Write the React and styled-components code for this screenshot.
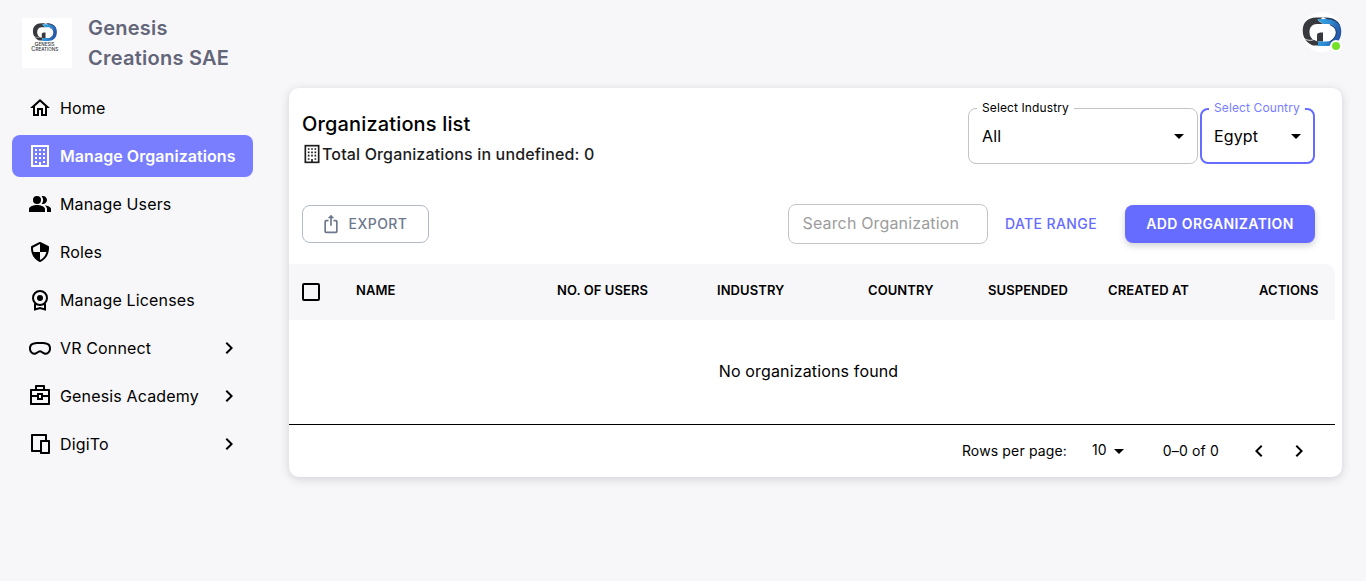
import React from "react";
import styled, { createGlobalStyle, css } from "styled-components";
import { BiShieldQuarter } from "react-icons/bi";
import { MdPeopleAlt, MdChevronRight, MdChevronLeft } from "react-icons/md";
import { RiBriefcase4Line, RiDeviceLine } from "react-icons/ri";
import { TbDeviceVisionPro } from "react-icons/tb";

const GlobalStyle = createGlobalStyle`
  *, *::before, *::after { box-sizing: border-box; }
  body {
    margin: 0;
    background: #f7f7f9;
    color: #000;
    font-family: Inter, "Liberation Sans", sans-serif;
    font-size: 16px;
    letter-spacing: 0.15px;
  }
  button, input { font: inherit; color: inherit; letter-spacing: inherit; }
`;

const Page = styled.div`
  display: flex;
  min-height: 581px;
`;

const Sidebar = styled.aside`
  width: 265px;
  flex: none;
  padding: 13px 12px 0;
`;

const Brand = styled.div`
  display: flex;
  align-items: center;
  gap: 16px;
  height: 60px;
  padding-left: 10px;
`;

const BrandLogo = styled.div`
  width: 50px;
  height: 50px;
  background: #fff;
  svg { display: block; }
`;

const BrandName = styled.h1`
  margin: 0;
  width: 150px;
  font-size: 20px;
  line-height: 30px;
  font-weight: 600;
  letter-spacing: 0.25px;
  color: #636578;
`;

const Nav = styled.nav`
  display: flex;
  flex-direction: column;
  gap: 6px;
  margin-top: 14px;
`;

const NavItem = styled.a`
  display: flex;
  align-items: center;
  gap: 8px;
  height: 42px;
  padding: 0 12px 0 16px;
  border-radius: 8px;
  line-height: 24px;
  ${(p) =>
    p.$active &&
    css`
      background: #787eff;
      color: #fff;
      font-weight: 600;
      letter-spacing: 0.06px;
    `}
  svg { flex: none; }
`;

const NavLabel = styled.span`
  flex: 1;
  white-space: nowrap;
`;

const Main = styled.main`
  flex: 1;
  padding: 12px 24px 0;
`;

const TopBar = styled.header`
  display: flex;
  justify-content: flex-end;
  height: 76px;
`;

const Avatar = styled.div`
  position: relative;
  width: 40px;
  height: 40px;
  border-radius: 50%;
  background: #fff;
`;

const OnlineDot = styled.span`
  position: absolute;
  right: 0;
  bottom: 0;
  width: 12px;
  height: 12px;
  border-radius: 50%;
  background: #72e128;
  border: 2px solid #fff;
`;

const Card = styled.section`
  height: 389px;
  padding-right: 7px;
  background: #fff;
  border-radius: 10px;
  box-shadow: 0 2px 10px rgba(76, 78, 100, 0.22);
`;

const CardHeader = styled.div`
  display: flex;
  justify-content: space-between;
  height: 117px;
  padding: 20px 20px 0 13px;
`;

const Title = styled.h2`
  margin: 0;
  font-size: 20px;
  line-height: 32px;
  font-weight: 500;
`;

const Total = styled.div`
  display: flex;
  align-items: center;
  height: 28px;
  font-weight: 500;
  color: #1c1c1c;
`;

const Filters = styled.div`
  display: flex;
  gap: 2px;
`;

const Select = styled.fieldset`
  display: flex;
  align-items: center;
  justify-content: space-between;
  position: relative;
  width: ${(p) => p.$width}px;
  height: 56px;
  margin: 0;
  padding: 0 ${(p) => (p.$focused ? 5 : 6)}px 0 ${(p) => (p.$focused ? 12 : 13)}px;
  border: ${(p) => (p.$focused ? "2px solid #666cff" : "1px solid #c4c4c4")};
  border-radius: 8px;
`;

const FloatingLabel = styled.span`
  position: absolute;
  top: ${(p) => (p.$focused ? -10 : -9)}px;
  left: ${(p) => (p.$focused ? 7 : 8)}px;
  padding: 0 5px;
  background: #fff;
  font-size: 12px;
  line-height: 16px;
  letter-spacing: 0.11px;
  white-space: nowrap;
  color: ${(p) => (p.$focused ? "#787eff" : "#000")};
`;

const Toolbar = styled.div`
  display: flex;
  align-items: center;
  height: 38px;
  padding: 0 20px 0 13px;
`;

const Button = styled.button`
  display: inline-flex;
  align-items: center;
  justify-content: center;
  gap: 8px;
  height: 38px;
  padding: 0 0 1px;
  border: 0;
  border-radius: 8px;
  background: none;
  font-size: 14px;
  font-weight: 500;
  letter-spacing: 0.4px;
  white-space: nowrap;
`;

const ExportButton = styled(Button)`
  width: 127px;
  padding-right: 3px;
  border: 1px solid #b4b9c6;
  color: #6d788d;
  letter-spacing: 0.46px;
  margin-right: auto;
  svg { position: relative; top: 0.5px; }
`;

const SearchInput = styled.input`
  width: 200px;
  height: 40px;
  padding: 0 13px 2px 13.5px;
  border: 1px solid #c4c4c4;
  border-radius: 8px;
  background: #fff;
  outline: 0;
  &::placeholder { color: #9c9c9c; opacity: 1; }
`;

const DateButton = styled(Button)`
  width: 126px;
  color: #666cff;
`;

const AddButton = styled(Button)`
  width: 190px;
  margin-left: 11px;
  background: #666cff;
  color: #fff;
  font-weight: 600;
  box-shadow: 0 3px 6px rgba(76, 78, 100, 0.25);
`;

const TableHead = styled.div`
  display: grid;
  grid-template-columns: 54px 201px 160px 151px 120px 120px 151px 1fr;
  align-items: center;
  height: 56px;
  margin-top: 21px;
  padding: 0 0 4px 13px;
  background: #f7f7f9;
  border-top-right-radius: 10px;
  font-size: 13px;
  font-weight: 600;
  letter-spacing: 0.07px;
  white-space: nowrap;
`;

const Checkbox = styled.span`
  width: 18px;
  height: 18px;
  margin-top: 4px;
  border: 2px solid #000;
  border-radius: 2px;
`;

const EmptyRow = styled.div`
  display: flex;
  align-items: center;
  justify-content: center;
  height: 105px;
  padding-right: 7px;
  padding-bottom: 2px;
  border-bottom: 1px solid #000;
`;

const Pagination = styled.div`
  display: flex;
  align-items: center;
  justify-content: flex-end;
  height: 52px;
  padding-right: 24px;
  font-size: 14px;
  line-height: 20px;
`;

const PageText = styled.span`
  padding-bottom: 1px;
`;

const PageSize = styled.span`
  display: flex;
  align-items: center;
  margin: 0 32px 0 25px;
`;

const PageCount = styled.span`
  padding-bottom: 2px;
`;

const Pager = styled.span`
  display: flex;
  gap: 16px;
  margin-left: 28px;
`;

const BuildingIcon = ({ size = 24, weight = 2 }) => (
  <svg width={size} height={size} viewBox="0 0 24 24" fill="none">
    <rect x="4" y="2" width="16" height="20" stroke="currentColor" strokeWidth={weight} />
    <path
      fill="currentColor"
      d="M7 5h2v2H7zM11 5h2v2h-2zM15 5h2v2h-2zM7 9h2v2H7zM11 9h2v2h-2zM15 9h2v2h-2zM7 13h2v2H7zM11 13h2v2h-2zM15 13h2v2h-2zM7 17h2v2H7zM15 17h2v2h-2zM11 18h2v4h-2z"
    />
  </svg>
);

const HomeIcon = () => (
  <svg width="24" height="24" viewBox="0 0 24 24" fill="currentColor">
    <path d="M12 5.69L17 10.19V18H15V12H9V18H7V10.19L12 5.69M12 3L2 12H5V20H11V14H13V20H19V12H22" />
  </svg>
);

const LicenseIcon = () => (
  <svg width="24" height="24" viewBox="0 0 24 24" fill="none" stroke="currentColor" strokeWidth="2">
    <circle cx="12" cy="10" r="7" />
    <circle cx="12" cy="10" r="3" fill="currentColor" stroke="none" />
    <path d="M7 15.5V21.4L12 20L17 21.4V15.5" />
  </svg>
);

const ExportIcon = () => (
  <svg width="20" height="20" viewBox="0 0 24 24" fill="currentColor">
    <path d="M12,1L8,5H11V14H13V5H16M18,23H6C4.89,23 4,22.1 4,21V9A2,2 0 0,1 6,7H9V9H6V21H18V9H15V7H18A2,2 0 0,1 20,9V21A2,2 0 0,1 18,23Z" />
  </svg>
);

const CaretIcon = () => (
  <svg width="24" height="24" viewBox="0 0 24 24" fill="currentColor">
    <path d="M7,10L12,15L17,10H7Z" />
  </svg>
);

const LogoMark = () => (
  <>
    <defs>
      <linearGradient id="markBlue" x1="0" y1="0" x2="1" y2="0.3">
        <stop offset="0" stopColor="#35a7e0" />
        <stop offset="0.5" stopColor="#2f8fd6" />
        <stop offset="1" stopColor="#2458a8" />
      </linearGradient>
    </defs>
    <path fill="#37393e" d="M21 5.500H14C6 5.500 .7 10.500.7 18.500C.7 26 5 31 11 33.500H16V29.500C10 28 7.500 25 7.500 20C7.500 15 10.500 12 15 12H21L16 8.500Z" />
    <path fill="none" stroke="#fff" strokeWidth="0.8" d="M1.500 26C6 29.500 12 29 13.500 25.500" />
    <path fill="#37393e" d="M15 22.500C15.500 21 17 20.500 21 20.500V29.500H15Z" />
    <path fill="url(#markBlue)" d="M15 7H27C35 7 39.300 12 39.300 19.500C39.300 29 33 34 25 34H16V29.500H25C30.500 29.500 34 26 34 20C34 15 31 12 26 12H21Z" />
    <path fill="#263b60" d="M21 5.500H24C32 5.500 37 9.500 38.500 14.500C35 9.500 31 7.500 26 7.500Z" />
    <path fill="none" stroke="#1d4384" strokeWidth="1.200" d="M28 12.500C36 16 37 24 28 30" />
  </>
);

const BrandMark = () => (
  <svg width="50" height="50" viewBox="0 0 50 50">
    <g transform="translate(10.500 1.800) scale(0.62)">
      <LogoMark />
    </g>
    <g fill="#303238" fontFamily="Inter" fontWeight="500" letterSpacing="0">
      <text x="12.500" y="28" fontSize="5" textLength="20" lengthAdjust="spacingAndGlyphs">
        G<tspan fontSize="4.200">ENESIS</tspan>
      </text>
      <text x="9.300" y="32.800" fontSize="5.600" textLength="27" lengthAdjust="spacingAndGlyphs">
        C<tspan fontSize="4.600">REATIONS</tspan>
      </text>
    </g>
  </svg>
);

const navItems = [
  { label: "Home", icon: <HomeIcon /> },
  { label: "Manage Organizations", icon: <BuildingIcon />, active: true },
  { label: "Manage Users", icon: <MdPeopleAlt size={24} /> },
  { label: "Roles", icon: <BiShieldQuarter size={24} /> },
  { label: "Manage Licenses", icon: <LicenseIcon /> },
  { label: "VR Connect", icon: <TbDeviceVisionPro size={24} />, expandable: true },
  { label: "Genesis Academy", icon: <RiBriefcase4Line size={24} />, expandable: true },
  { label: "DigiTo", icon: <RiDeviceLine size={24} />, expandable: true },
];

const columns = ["NAME", "NO. OF USERS", "INDUSTRY", "COUNTRY", "SUSPENDED", "CREATED AT", "ACTIONS"];

export default function App() {
  return (
    <>
      <GlobalStyle />
      <Page>
        <Sidebar>
          <Brand>
            <BrandLogo><BrandMark /></BrandLogo>
            <BrandName>Genesis Creations SAE</BrandName>
          </Brand>
          <Nav>
            {navItems.map((item) => (
              <NavItem key={item.label} $active={item.active}>
                {item.icon}
                <NavLabel>{item.label}</NavLabel>
                {item.expandable && <MdChevronRight size={24} />}
              </NavItem>
            ))}
          </Nav>
        </Sidebar>
        <Main>
          <TopBar>
            <Avatar>
              <svg width="40" height="40" viewBox="0 0 40 40"><LogoMark /></svg>
              <OnlineDot />
            </Avatar>
          </TopBar>
          <Card>
            <CardHeader>
              <div>
                <Title>Organizations list</Title>
                <Total>
                  <BuildingIcon size={20} weight={2} />
                  Total Organizations in undefined: 0
                </Total>
              </div>
              <Filters>
                <Select $width={230}>
                  <FloatingLabel>Select Industry</FloatingLabel>
                  All
                  <CaretIcon />
                </Select>
                <Select $width={115} $focused>
                  <FloatingLabel $focused>Select Country</FloatingLabel>
                  Egypt
                  <CaretIcon />
                </Select>
              </Filters>
            </CardHeader>
            <Toolbar>
              <ExportButton><ExportIcon />EXPORT</ExportButton>
              <SearchInput placeholder="Search Organization" />
              <DateButton>DATE RANGE</DateButton>
              <AddButton>ADD ORGANIZATION</AddButton>
            </Toolbar>
            <TableHead>
              <Checkbox />
              {columns.map((name) => <span key={name}>{name}</span>)}
            </TableHead>
            <EmptyRow>No organizations found</EmptyRow>
            <Pagination>
              <PageText>Rows per page:</PageText>
              <PageSize><PageCount>10</PageCount><CaretIcon /></PageSize>
              <PageText>0–0 of 0</PageText>
              <Pager>
                <MdChevronLeft size={24} />
                <MdChevronRight size={24} />
              </Pager>
            </Pagination>
          </Card>
        </Main>
      </Page>
    </>
  );
}
